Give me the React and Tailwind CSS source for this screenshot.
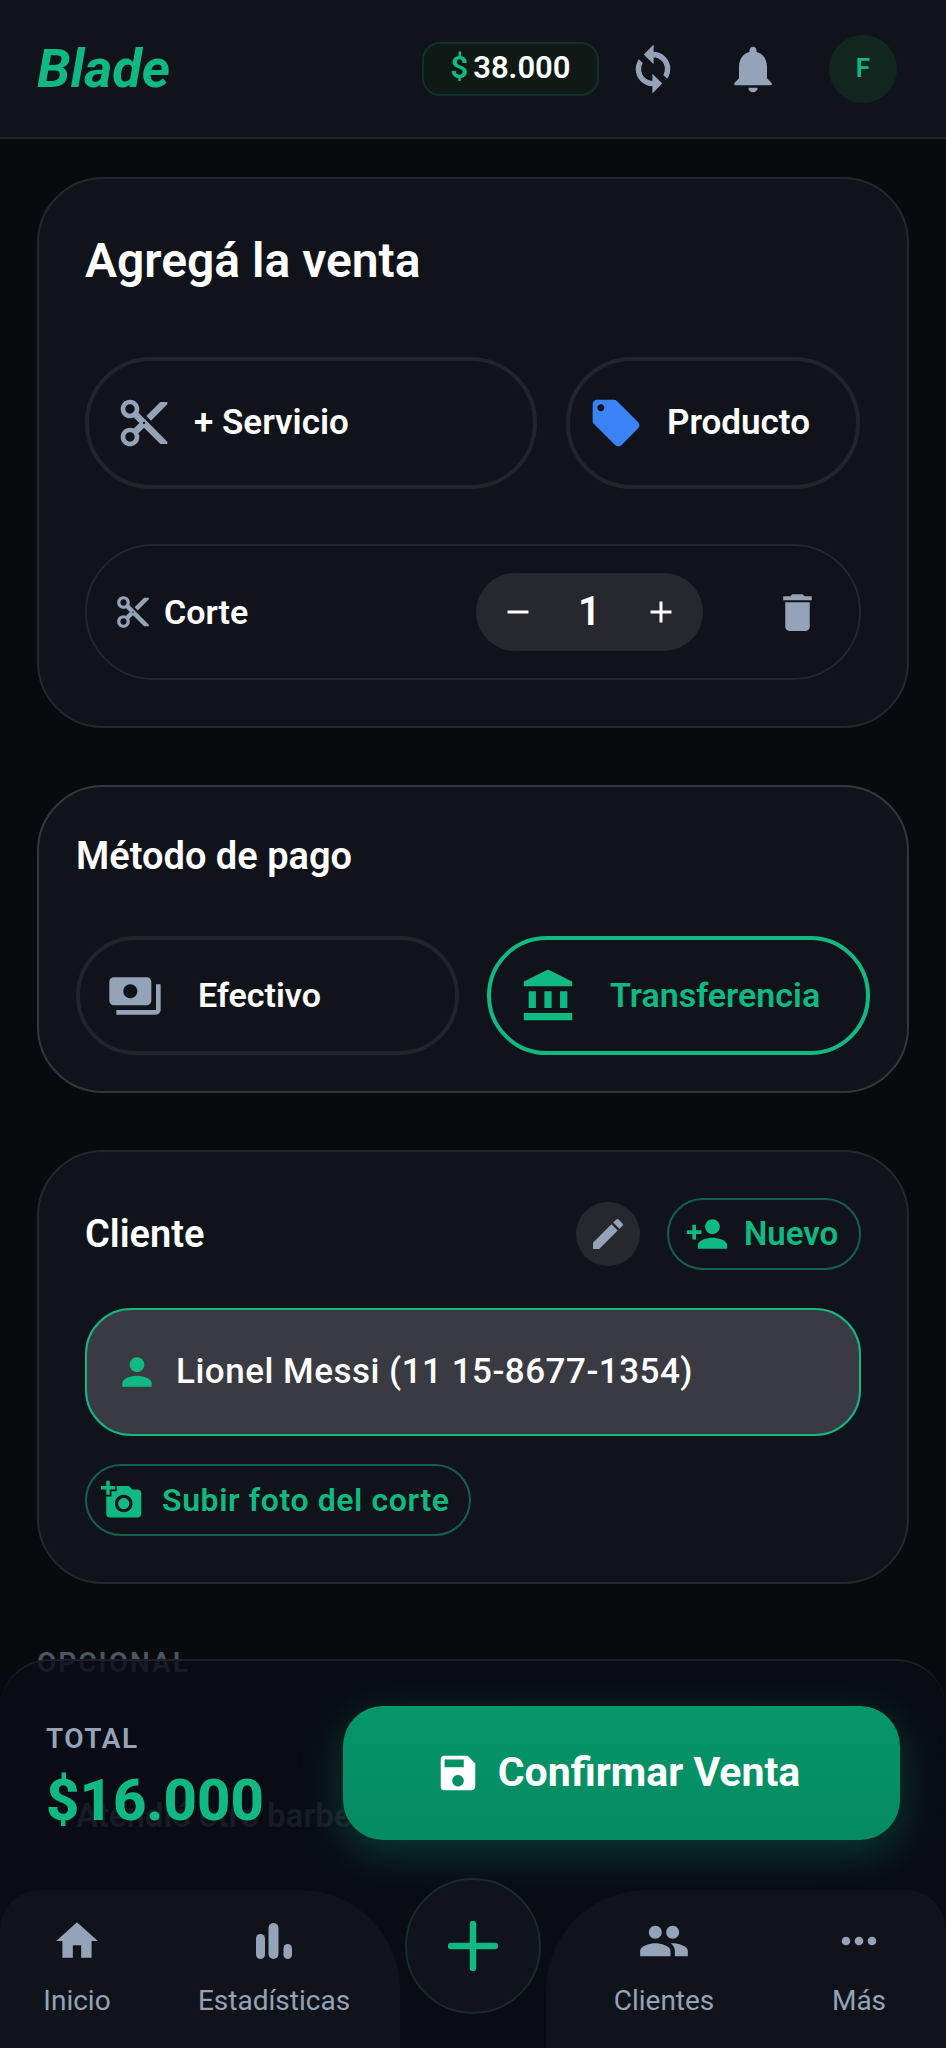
import {
  MdContentCut, MdLocalOffer, MdDelete, MdNotifications, MdPayments, MdAccountBalance,
  MdEdit, MdPersonAdd, MdPerson, MdAddAPhoto, MdSave, MdHome, MdPeople, MdMoreHoriz,
  MdAdd, MdRemove,
} from "react-icons/md"

function NavItem({ icon, label, className }) {
  return (
    <div className={"flex flex-col items-center gap-[16px] " + className}>
      <div className="h-[56px] flex items-center justify-center text-[#94a3b8]">{icon}</div>
      <span className="text-[28px] leading-[32px] text-[#94a3b8]">{label}</span>
    </div>
  )
}

function BarsIcon() {
  return (
    <svg width="36" height="36" viewBox="0 0 36 36" fill="currentColor">
      <rect x="0" y="11" width="9" height="25" rx="4.5" />
      <rect x="12.5" y="0" width="10" height="36" rx="5" />
      <rect x="27.5" y="21" width="8.5" height="15" rx="4.25" />
    </svg>
  )
}

function SyncIcon() {
  return (
    <svg width="50" height="50" viewBox="0 0 24 24" fill="currentColor" stroke="currentColor" strokeWidth="0.6" className="ml-[29px] text-[#94a3b8]">
      <path d="M12 4V1L8 5l4 4V6c3.31 0 6 2.69 6 6 0 1.01-.25 1.97-.7 2.8l1.46 1.46C19.54 15.03 20 13.57 20 12c0-4.42-3.58-8-8-8zm0 14c-3.31 0-6-2.69-6-6 0-1.01.25-1.97.7-2.8L5.24 7.74C4.46 8.97 4 10.43 4 12c0 4.42 3.58 8 8 8v3l4-4-4-4v3z" />
    </svg>
  )
}

export default function App() {
  return (
    <div className="relative h-[2048px] w-[946px] overflow-hidden bg-[#090a0e] font-['Roboto',sans-serif] text-white">
      <header className="h-[139px] flex items-center pl-[37px] pr-[49px] bg-[#11131a] border-b-2 border-[#24262c]">
        <span className="text-[54px] font-bold italic text-[#10b981] leading-none">Blade</span>
        <div className="ml-auto flex items-center">
          <div className="h-[54px] w-[177px] flex items-center justify-center gap-[5px] rounded-[18px] bg-[#0f1916] border-2 border-[#10302a] text-[31px] font-semibold">
            <span className="text-[#10b981]">$</span>
            <span>38.000</span>
          </div>
          <SyncIcon />
          <MdNotifications size={56} className="ml-[47px] text-[#94a3b8]" />
          <div className="ml-[48px] w-[68px] h-[68px] rounded-full bg-[#10261f] flex items-center justify-center text-[#10b981] text-[26px] font-semibold">F</div>
        </div>
      </header>

      <main className="px-[37px] pt-[38px] flex flex-col gap-[57px]">
        <section className="h-[551px] rounded-[66px] bg-[#11131a] border-2 border-[#25272d] px-[46px] pt-[55px]">
          <h1 className="text-[48px] leading-[54px] font-semibold">Agregá la venta</h1>
          <div className="mt-[69px] flex gap-[29px]">
            <button className="w-[452px] h-[132px] rounded-full border-[4px] border-[#222429] flex items-center pl-[27px] gap-[22px]">
              <MdContentCut size={56} className="text-[#94a3b8]" />
              <span className="text-[35px] font-semibold">+ Servicio</span>
            </button>
            <button className="w-[294px] h-[132px] rounded-full border-[4px] border-[#222429] flex items-center pl-[18px] gap-[23px]">
              <MdLocalOffer size={56} className="text-[#3b82f6]" />
              <span className="text-[35px] font-semibold">Producto</span>
            </button>
          </div>
          <div className="mt-[55px] h-[136px] rounded-full border-2 border-[#24262c] flex items-center pl-[27px] pr-[37px]">
            <MdContentCut size={38} className="text-[#94a3b8]" />
            <span className="ml-[12px] text-[34px] font-semibold">Corte</span>
            <div className="ml-auto w-[227px] h-[78px] rounded-full bg-[#26282d] flex items-center justify-between px-[24px]">
              <MdRemove size={36} />
              <span className="text-[40px] font-semibold">1</span>
              <MdAdd size={36} />
            </div>
            <MdDelete size={49} className="ml-[70px] text-[#94a3b8]" />
          </div>
        </section>

        <section className="h-[308px] rounded-[66px] bg-[#11131a] border-2 border-[#34363c] px-[37px] pt-[48px]">
          <h2 className="text-[38px] leading-[42px] font-semibold">Método de pago</h2>
          <div className="mt-[59px] flex gap-[28px]">
            <button className="w-[383px] h-[119px] rounded-full border-[4px] border-[#222429] flex items-center pl-[27px] gap-[35px]">
              <MdPayments size={56} className="text-[#94a3b8]" />
              <span className="text-[34px] font-semibold">Efectivo</span>
            </button>
            <button className="w-[383px] h-[119px] rounded-full border-[4px] border-[#10b981] flex items-center pl-[28px] gap-[33px]">
              <MdAccountBalance size={58} className="text-[#10b981]" />
              <span className="text-[34px] font-semibold text-[#10b981]">Transferencia</span>
            </button>
          </div>
        </section>

        <section className="h-[434px] rounded-[66px] bg-[#11131a] border-2 border-[#25272d] px-[46px] pt-[46px]">
          <div className="h-[72px] flex items-center">
            <h2 className="text-[38px] font-semibold">Cliente</h2>
            <div className="ml-auto w-[64px] h-[64px] rounded-full bg-[#26282d] flex items-center justify-center">
              <MdEdit size={40} className="text-[#94a3b8]" />
            </div>
            <button className="ml-[27px] w-[194px] h-[72px] rounded-full border-2 border-[#14604b] flex items-center pl-[16px] gap-[15px]">
              <MdPersonAdd size={44} className="text-[#10b981]" />
              <span className="text-[33px] font-semibold text-[#10b981]">Nuevo</span>
            </button>
          </div>
          <div className="mt-[38px] h-[128px] rounded-[46px] bg-[#3a3a42] border-2 border-[#10b981] flex items-center pl-[28px] gap-[17px]">
            <MdPerson size={44} className="text-[#10b981]" />
            <span className="text-[35px] font-medium tracking-[0.5px]">Lionel Messi (11 15-8677-1354)</span>
          </div>
          <button className="mt-[28px] w-[386px] h-[72px] rounded-full border-2 border-[#14604b] flex items-center pl-[14px] gap-[19px]">
            <MdAddAPhoto size={42} className="text-[#10b981]" />
            <span className="text-[32px] font-semibold text-[#10b981] tracking-[0.6px]">Subir foto del corte</span>
          </button>
        </section>

        <div className="mt-[7px]">
          <p className="text-[28px] font-semibold tracking-[2px] text-[#4b5563] leading-[30px]">OPCIONAL</p>
          <p className="mt-[117px] ml-[39px] text-[33px] leading-[42px] font-semibold text-[#4b5563]">Atendió otro barbero</p>
        </div>
      </main>

      {/* resumen fijo abajo */}
      <div className="absolute left-0 right-0 bottom-0 h-[389px] rounded-t-[50px] bg-[#0a0d16]/80 border-t-2 border-[#1d2028] px-[46px] pt-[45px] flex justify-between items-start">
        <div className="pt-[17px]">
          <p className="text-[28px] leading-[32px] font-semibold text-[#94a3b8] tracking-[1.5px]">TOTAL</p>
          <p className="mt-[11px] text-[58px] leading-[68px] font-extrabold text-[#10b981]">$16.000</p>
        </div>
        <button className="w-[557px] h-[134px] rounded-[40px] bg-gradient-to-b from-[#059669] to-[#058a61] shadow-[0_12px_44px_rgba(16,185,129,0.28)] flex items-center justify-center gap-[17px] pr-[8px]">
          <MdSave size={46} />
          <span className="text-[41px] font-bold">Confirmar Venta</span>
        </button>
      </div>

      {/* navegacion */}
      <nav className="absolute left-0 right-0 bottom-0 h-[158px] flex justify-between">
        <div className="w-[400px] bg-[#11131a] rounded-tl-[40px] rounded-tr-[100px] flex pt-[23px]">
          <NavItem icon={<MdHome size={50} />} label="Inicio" className="w-[78px] ml-[38px]" />
          <NavItem icon={<BarsIcon />} label="Estadísticas" className="w-[152px] ml-[82px]" />
        </div>
        <div className="w-[400px] bg-[#11131a] rounded-tr-[40px] rounded-tl-[100px] flex pt-[23px]">
          <NavItem icon={<MdPeople size={52} />} label="Clientes" className="w-[100px] ml-[68px]" />
          <NavItem icon={<MdMoreHoriz size={52} />} label="Más" className="w-[54px] ml-[118px]" />
        </div>
      </nav>
      <button className="absolute left-[405px] bottom-[34px] w-[136px] h-[136px] rounded-full bg-[#11131a] border-2 border-[#1b2a28] flex items-center justify-center">
        <svg width="50" height="50" viewBox="0 0 50 50" stroke="#10b981" strokeWidth="6.5" strokeLinecap="round">
          <line x1="25" y1="3" x2="25" y2="47" />
          <line x1="3" y1="25" x2="47" y2="25" />
        </svg>
      </button>
    </div>
  )
}
